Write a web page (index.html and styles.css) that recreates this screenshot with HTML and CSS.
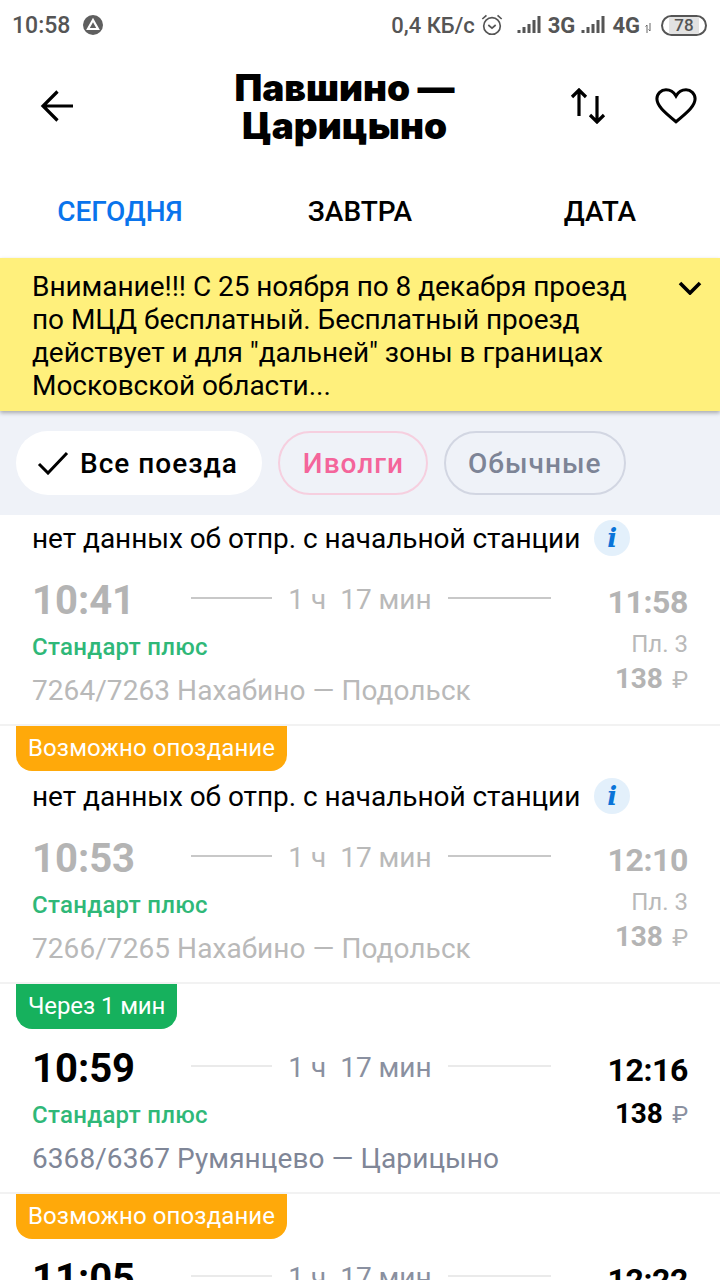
FILE: index.html
```html
<!DOCTYPE html>
<html lang="ru">
<head>
  <meta charset="UTF-8">
  <meta name="viewport" content="width=device-width, initial-scale=1.0">
  <title>Павшино — Царицыно</title>
  <link rel="stylesheet" href="styles.css">
</head>
<body>
  <div class="screen">
    <div class="status-bar">
      <div class="status-left">
        <span class="clock">10:58</span>
        <svg class="status-app" width="22" height="22" viewBox="0 0 22 22"><circle cx="11" cy="11" r="10" fill="#5f5f5f"/><path d="M11 6l5 9H6z" fill="none" stroke="#fff" stroke-width="2.2"/></svg>
      </div>
      <div class="status-right">
        <span class="net-speed">0,4 КБ/с</span>
        <svg class="alarm" width="24" height="24" viewBox="0 0 26 26" fill="none" stroke="#555" stroke-width="1.8"><circle cx="13" cy="14" r="9"/><path d="M9 13l4 3.500 4-3.500M2.500 6.500L7 2.500M23.500 6.500L19 2.500"/></svg>
        <svg class="signal" width="28" height="20" viewBox="0 0 23 20" fill="#555"><rect x="0" y="15" width="3" height="3"/><rect x="5" y="12" width="3" height="6"/><rect x="10" y="9" width="3" height="9"/><rect x="15" y="5" width="3" height="13"/><rect x="20" y="1" width="3" height="17"/></svg>
        <span class="net-type">3G</span>
        <svg class="signal" width="28" height="20" viewBox="0 0 23 20" fill="#555"><rect x="0" y="15" width="3" height="3"/><rect x="5" y="12" width="3" height="6"/><rect x="10" y="9" width="3" height="9"/><rect x="15" y="5" width="3" height="13"/><rect x="20" y="1" width="3" height="17"/></svg>
        <span class="net-type">4G</span>
        <svg class="updown" width="7" height="10" viewBox="0 0 7 10" fill="none" stroke="#666" stroke-width="1"><path d="M2 10V2M0.500 3.500L2 2M5 0v8M3.500 6.500L5 8"/></svg>
        <span class="battery"><span class="battery-level"></span><span class="battery-num">78</span></span>
      </div>
    </div>

    <header class="top-bar">
      <svg class="back-icon" width="36" height="36" viewBox="0 0 36 36" fill="none" stroke="#000" stroke-width="3.2"><path d="M34 18H4M18.500 3.500L4 18l14.500 14.500"/></svg>
      <h1 class="route-title">Павшино —<br>Царицыно</h1>
      <svg class="swap-icon" width="36" height="36" viewBox="0 0 36 36" fill="none" stroke="#000" stroke-width="3.2"><path d="M9 28V2M2 9l7-7 7 7M27 8v26M20 27l7 7 7-7"/></svg>
      <svg class="heart-icon" width="42" height="38" viewBox="0 0 44 38" fill="none" stroke="#000" stroke-width="3.2"><path d="M22 35.500C9 25 2 18.500 2 11.500 2 6 6.500 2 11.500 2c4.300 0 8 2.200 10.500 6.500C24.500 4.200 28.200 2 32.500 2 37.500 2 42 6 42 11.500c0 7-7 13.500-20 24z"/></svg>
    </header>

    <nav class="tabs">
      <span class="tab tab-active">СЕГОДНЯ</span>
      <span class="tab">ЗАВТРА</span>
      <span class="tab">ДАТА</span>
    </nav>

    <div class="notice">
      <p>Внимание!!! С 25 ноября по 8 декабря проезд по МЦД бесплатный. Бесплатный проезд действует и для "дальней" зоны в границах Московской области...</p>
      <svg class="notice-arrow" width="24" height="14" viewBox="0 0 24 14" fill="none" stroke="#000" stroke-width="3.6"><path d="M2 2l10 10L22 2"/></svg>
    </div>

    <div class="filters">
      <span class="chip chip-all">
        <svg width="32" height="24" viewBox="0 0 32 24" fill="none" stroke="#000" stroke-width="3"><path d="M2 13l9 9L30 2"/></svg>
        Все поезда
      </span>
      <span class="chip chip-pink">Иволги</span>
      <span class="chip chip-gray">Обычные</span>
    </div>

    <div class="train-list">
      <section class="train train-past train-first">
        <div class="train-note">нет данных об отпр. с начальной станции <span class="info-dot">i</span></div>
        <div class="train-times">
          <span class="depart">10:41</span>
          <span class="line line-a"></span>
          <span class="duration">1 ч&nbsp; 17 мин</span>
          <span class="line line-b"></span>
          <span class="arrive">11:58</span>
        </div>
        <div class="train-info">
          <div class="train-left">
            <div class="train-type">Стандарт плюс</div>
            <div class="train-route">7264/7263 Нахабино — Подольск</div>
          </div>
          <div class="train-right">
            <div class="platform">Пл. 3</div>
            <div class="price">138 <span class="rub">₽</span></div>
          </div>
        </div>
      </section>

      <section class="train train-past">
        <div class="badge badge-late">Возможно опоздание</div>
        <div class="train-note">нет данных об отпр. с начальной станции <span class="info-dot">i</span></div>
        <div class="train-times">
          <span class="depart">10:53</span>
          <span class="line line-a"></span>
          <span class="duration">1 ч&nbsp; 17 мин</span>
          <span class="line line-b"></span>
          <span class="arrive">12:10</span>
        </div>
        <div class="train-info">
          <div class="train-left">
            <div class="train-type">Стандарт плюс</div>
            <div class="train-route">7266/7265 Нахабино — Подольск</div>
          </div>
          <div class="train-right">
            <div class="platform">Пл. 3</div>
            <div class="price">138 <span class="rub">₽</span></div>
          </div>
        </div>
      </section>

      <section class="train train-short">
        <div class="badge badge-soon">Через 1 мин</div>
        <div class="train-times">
          <span class="depart">10:59</span>
          <span class="line line-a"></span>
          <span class="duration">1 ч&nbsp; 17 мин</span>
          <span class="line line-b"></span>
          <span class="arrive">12:16</span>
        </div>
        <div class="train-info">
          <div class="train-left">
            <div class="train-type">Стандарт плюс</div>
            <div class="train-route">6368/6367 Румянцево — Царицыно</div>
          </div>
          <div class="train-right">
            <div class="price">138 <span class="rub">₽</span></div>
          </div>
        </div>
      </section>

      <section class="train train-short">
        <div class="badge badge-late">Возможно опоздание</div>
        <div class="train-times">
          <span class="depart">11:05</span>
          <span class="line line-a"></span>
          <span class="duration">1 ч&nbsp; 17 мин</span>
          <span class="line line-b"></span>
          <span class="arrive">12:22</span>
        </div>
      </section>
    </div>
  </div>
</body>
</html>
```

FILE: styles.css
```css
* {
  box-sizing: border-box;
}

html, body {
  margin: 0;
  padding: 0;
  background-color: #fff;
}

.screen {
  width: 720px;
  height: 1280px;
  overflow: hidden;
  font-family: Roboto, "Noto Sans", sans-serif;
  color: #000;
}

/* status bar */
.status-bar {
  display: flex;
  justify-content: space-between;
  align-items: center;
  height: 50px;
  padding: 0 13px 0 12px;
  color: #555;
  font-weight: 500;
}

.status-left, .status-right {
  display: flex;
  align-items: center;
}

.clock {
  font-size: 23px;
  margin-right: 12px;
}

.net-speed {
  font-size: 22px;
  margin-right: 5px;
}

.alarm {
  margin-right: 11px;
}

.signal {
  margin-right: 5px;
}

.net-type {
  font-size: 22px;
  font-weight: 700;
  margin-right: 4px;
}

.net-type:nth-of-type(3) {
  margin-right: 5px;
}

.updown {
  margin: 6px 9px 0 0;
}

.battery {
  position: relative;
  display: flex;
  align-items: center;
  justify-content: center;
  width: 46px;
  height: 21px;
  border: 2px solid #555;
  border-radius: 11px;
  overflow: hidden;
}

.battery-level {
  position: absolute;
  left: 6px;
  right: 6px;
  top: 0;
  bottom: 0;
  background-color: #e2e2e2;
}

.battery-num {
  position: relative;
  font-size: 17px;
  line-height: 17px;
}

/* header */
.top-bar {
  display: flex;
  align-items: center;
  height: 112px;
  padding: 0 23px 0 39px;
}

.route-title {
  flex: 1;
  margin: 0;
  padding: 2px 0 0 44px;
  font-family: Inter, Roboto, sans-serif;
  font-size: 37px;
  line-height: 38px;
  font-weight: 900;
  text-align: center;
}

.swap-icon {
  margin-right: 49px;
}

.tabs {
  display: flex;
  height: 96px;
  align-items: center;
  padding-top: 2px;
}

.tab {
  width: 240px;
  text-align: center;
  font-size: 28px;
  font-weight: 500;
}

.tab-active {
  color: #0a74ec;
}

/* yellow notice */
.notice {
  display: flex;
  justify-content: space-between;
  height: 153px;
  padding: 12px 18px 0 32px;
  background-color: #fff07c;
  box-shadow: 0 2px 4px rgba(0, 0, 0, 0.3);
  position: relative;
}

.notice p {
  margin: 0;
  width: 620px;
  font-size: 28px;
  line-height: 33px;
  letter-spacing: -0.05px;
}

.notice-arrow {
  margin-top: 11px;
}

/* filter chips */
.filters {
  display: flex;
  gap: 16px;
  height: 104px;
  padding: 20px 16px 0;
  background-color: #eff2f8;
}

.chip {
  display: flex;
  align-items: center;
  height: 64px;
  border-radius: 32px;
  font-size: 28px;
  font-weight: 500;
  letter-spacing: 1px;
}

.chip-all {
  gap: 11px;
  padding: 0 24px 0 21px;
  background-color: #fff;
}

.chip-pink {
  padding: 0 22px 0 23px;
  color: #f4659b;
  border: 2px solid #f6cfdf;
}

.chip-gray {
  padding: 0 23px 0 22px;
  color: #7d8496;
  border: 2px solid #d2d6e2;
}

/* trains */
.train {
  height: 258px;
  border-bottom: 2px solid #f2f2f2;
  padding: 0 32px;
}

.train-first {
  height: 211px;
}

.train-short {
  height: 210px;
}

.badge {
  height: 45px;
  width: fit-content;
  margin-left: -16px;
  padding: 0 12px;
  border-radius: 0 0 16px 16px;
  color: #fff;
  font-size: 24px;
  line-height: 44px;
  letter-spacing: 0.1px;
}

.badge-late {
  background-color: #ffa90a;
}

.badge-soon {
  background-color: #16b15d;
  letter-spacing: -0.1px;
}

.train-note {
  display: flex;
  align-items: center;
  height: 46px;
  font-size: 28px;
  letter-spacing: -0.05px;
  white-space: pre;
}

.badge + .train-note {
  margin-top: 2px;
}

.info-dot {
  display: flex;
  align-items: center;
  justify-content: center;
  width: 36px;
  height: 36px;
  margin-left: 7px;
  border-radius: 50%;
  background-color: #e3f0fb;
  color: #0a74d8;
  font-family: "DejaVu Serif", serif;
  font-style: italic;
  font-weight: 700;
  font-size: 26px;
}

.train-times {
  display: flex;
  align-items: center;
  height: 76px;
  margin-top: 1px;
}

.depart {
  width: 159px;
  font-size: 40px;
  font-weight: 700;
}

.line {
  height: 2px;
  margin-top: -4px;
  background-color: #eaeaea;
}

.line-a {
  width: 81px;
}

.line-b {
  width: 103px;
}

.duration {
  width: 176px;
  padding-bottom: 2px;
  text-align: center;
  font-size: 28px;
  color: #8a90a0;
}

.arrive {
  flex: 1;
  text-align: right;
  font-size: 32px;
  font-weight: 700;
  letter-spacing: -0.4px;
  padding-top: 4px;
}

.train-info {
  display: flex;
  justify-content: space-between;
}

.train-type {
  font-size: 24px;
  font-weight: 500;
  line-height: 28px;
  margin-top: -5px;
  letter-spacing: 0.3px;
  color: #2fb878;
}

.train-route {
  font-size: 28px;
  line-height: 34px;
  margin-top: 13px;
  letter-spacing: 0.07px;
  color: #7f8697;
}

.train-right {
  text-align: right;
}

.platform {
  font-size: 24px;
  line-height: 28px;
  margin-top: -8px;
  color: #8a90a0;
}

.price {
  font-size: 28px;
  font-weight: 700;
  line-height: 34px;
  margin-top: -9px;
  letter-spacing: -0.2px;
}

.platform + .price {
  margin-top: 4px;
}

.rub {
  margin-left: 3px;
  font-size: 24px;
  font-weight: 400;
  color: #8a90a0;
}

.train-past .depart,
.train-past .arrive,
.train-past .price {
  color: #b4b4b4;
}

.train-past .duration,
.train-past .platform,
.train-past .rub,
.train-past .train-route {
  color: #b9b9b9;
}

.train-past .line {
  background-color: #c8c8c8;
}
```
